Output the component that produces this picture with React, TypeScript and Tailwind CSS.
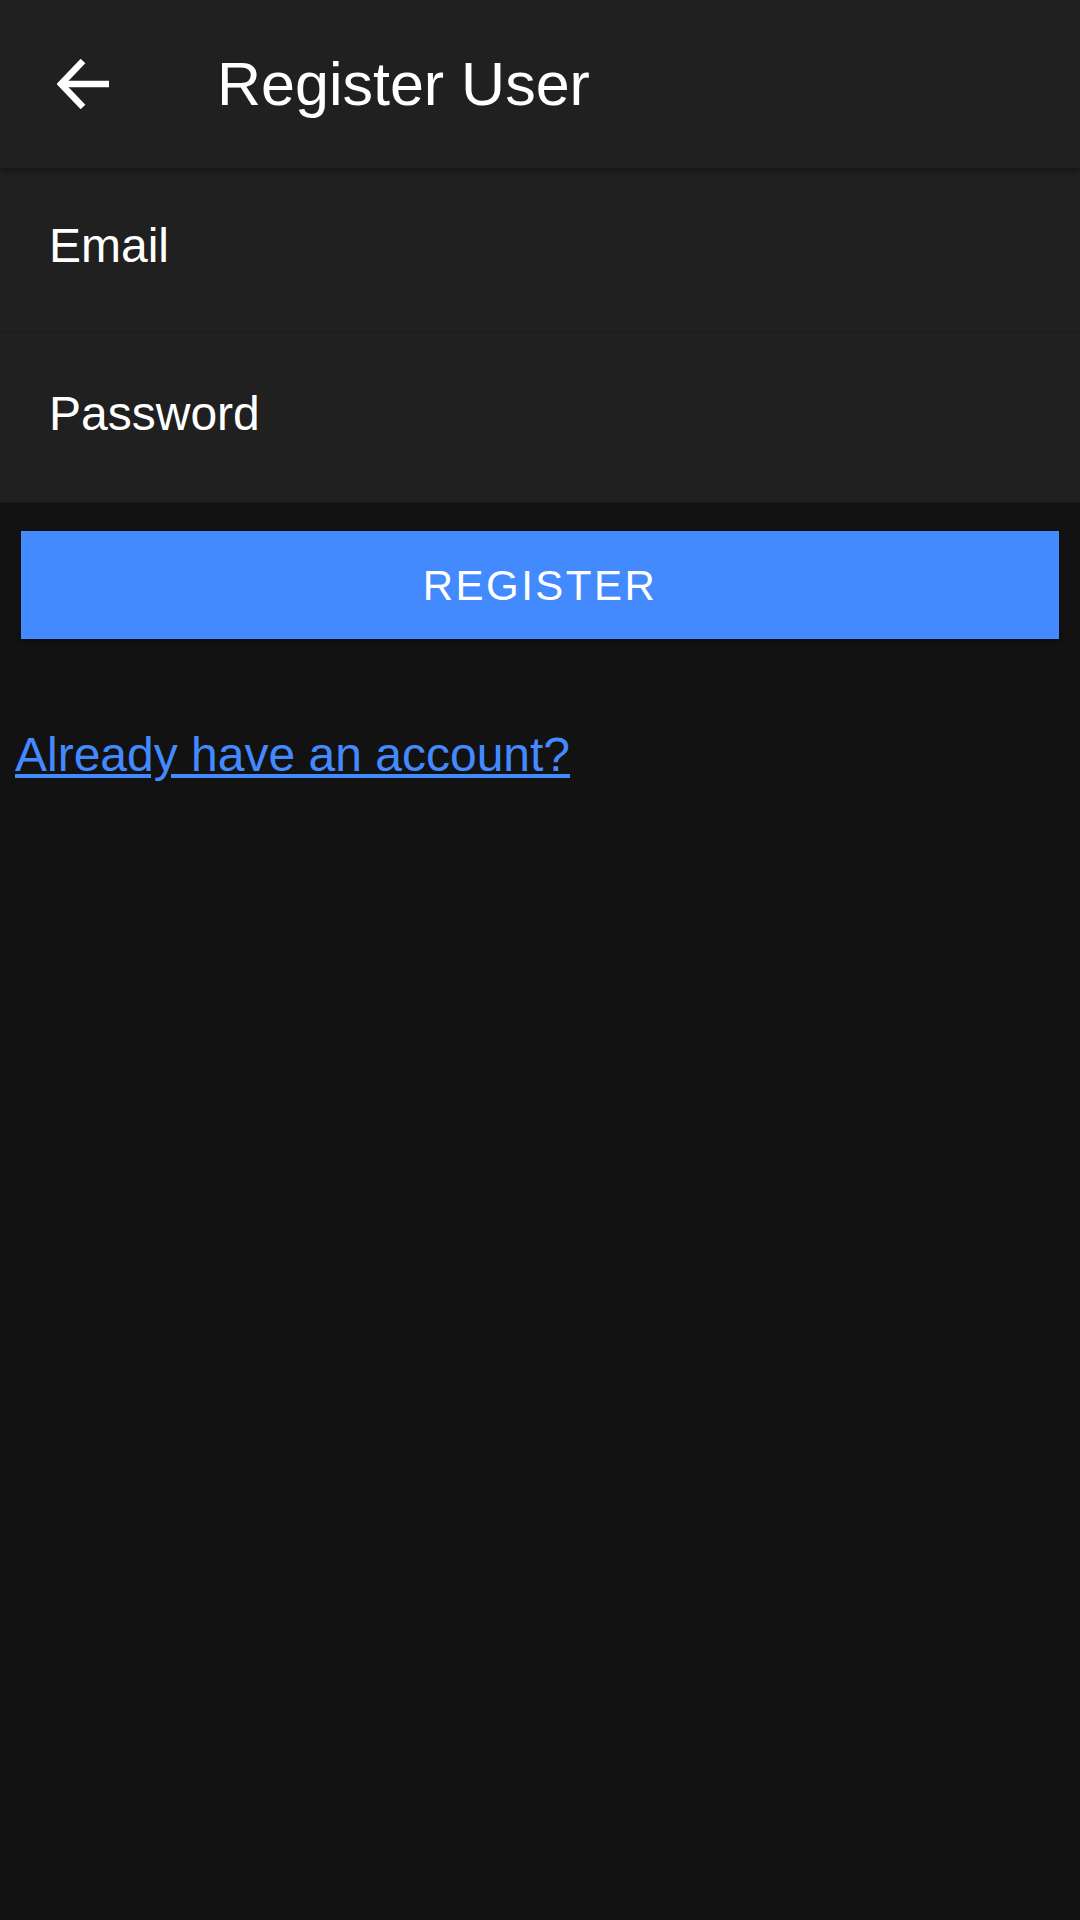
import React from 'react';

const font = { fontFamily: '"Liberation Sans", Arial, sans-serif' };

const BackArrow: React.FC = () => (
  <svg width="52" height="50" viewBox="0 0 52 50" fill="none" stroke="#ffffff" strokeWidth="6.5" strokeLinecap="butt" strokeLinejoin="miter">
    <path d="M3 25H52" />
    <path d="M26 2L4 25L26 48" />
  </svg>
);

const FieldRow: React.FC<{ label: string; last?: boolean }> = ({ label, last }) => (
  <div className={`flex items-center bg-[#202020] px-[49px] pb-[8px] border-b border-[#1b1b1b] ${last ? 'h-[170px]' : 'h-[165px]'}`}>
    <span className="text-[48px] leading-none text-white">{label}</span>
  </div>
);

const App: React.FC = () => {
  return (
    <div className="min-h-screen w-full bg-[#121212] text-white" style={font}>
      {/* top bar */}
      <header className="relative z-10 flex items-center h-[168px] bg-[#202020] shadow-[0_3px_6px_rgba(0,0,0,0.35)]">
        <button className="ml-[57px] flex items-center">
          <BackArrow />
        </button>
        <h1 className="ml-[108px] text-[61px] leading-none font-normal text-white">Register User</h1>
      </header>

      {/* form */}
      <FieldRow label="Email" />
      <FieldRow label="Password" last />

      <div className="px-[21px] pt-[28px]">
        <button className="w-full h-[108px] bg-[#448aff] text-white text-[42px] tracking-[2.5px] uppercase shadow-[0_2px_4px_rgba(0,0,0,0.4)]">
          Register
        </button>
      </div>

      <div className="px-[15px] pt-[92px]">
        <a href="#" className="text-[48px] leading-none text-[#448aff] underline">
          Already have an account?
        </a>
      </div>
    </div>
  );
};

export default App;
